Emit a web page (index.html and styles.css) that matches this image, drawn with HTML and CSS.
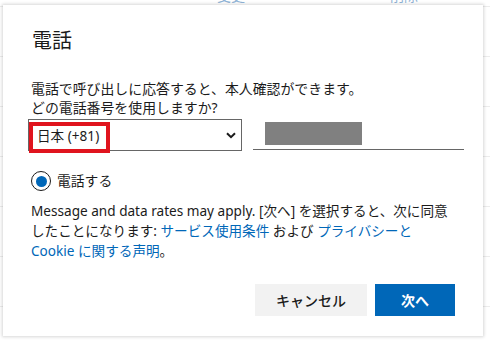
FILE: index.html
```html
<!DOCTYPE html>
<html lang="ja">
<head>
<meta charset="utf-8">
<link rel="stylesheet" href="styles.css">
</head>
<body>
<div class="page">
  <div class="page-head"><span class="bg-link l1">変更</span><span class="bg-link l2">削除</span></div>
  <div class="page-row"></div>
  <div class="page-row"></div>
  <div class="page-row"></div>
  <div class="page-row"></div>
  <div class="page-row"></div>
  <div class="page-row"></div>
</div>
<div class="dialog">
  <h1 class="title">電話</h1>
  <p class="intro">電話で呼び出しに応答すると、本人確認ができます。<br>どの電話番号を使用しますか?</p>
  <div class="fields">
    <div class="select">
      <span class="select-text">日本 (+81)</span>
      <svg class="chev" width="10" height="7" viewBox="0 0 10 7"><path d="M1 1.2 L5 5.2 L9 1.2" fill="none" stroke="#1b1b1b" stroke-width="2"/></svg>
      <div class="mark"></div>
    </div>
    <div class="phone"><div class="redact"></div></div>
  </div>
  <label class="radio"><span class="radio-circle"><span class="radio-dot"></span></span><span class="radio-text">電話する</span></label>
  <p class="terms">Message and data rates may apply. [次へ] を選択すると、次に同意したことになります: <a class="lnk">サービス使用条件</a> および <a class="lnk">プライバシーと Cookie に関する声明</a>。</p>
  <div class="buttons">
    <button class="btn btn-cancel">キャンセル</button>
    <button class="btn btn-next">次へ</button>
  </div>
</div>
</body>
</html>
```

FILE: styles.css
```css
html, body {
  margin: 0;
  padding: 0;
  background: #ffffff;
  width: 490px;
  height: 343px;
  overflow: hidden;
  font-family: "Noto Sans", "Noto Sans CJK JP", sans-serif;
  color: #1b1b1b;
}
.page {
  width: 490px;
}
.page-head {
  height: 18px;
  margin-top: -12px;
  position: relative;
  border-bottom: 1px solid #ececec;
}
.bg-link {
  position: absolute;
  top: 0;
  font-size: 14px;
  line-height: 16px;
  color: #8fb3d6;
}
.l1 { left: 217px; }
.l2 { left: 390px; }
.page-row {
  height: 49px;
  border-bottom: 1px solid #ececec;
}
.page-row:first-of-type { height: 50px; }
.dialog {
  position: absolute;
  left: 3px;
  top: 5px;
  width: 480px;
  height: 331px;
  box-sizing: border-box;
  background: #ffffff;
  box-shadow: 0 0 3px 1px rgba(0,0,0,0.16);
  padding: 22px 28px 20px 28px;
  display: flex;
  flex-direction: column;
}
.title {
  margin: 0;
  font-size: 20px;
  line-height: 28px;
  font-weight: 400;
  color: #1b1b1b;
  padding-left: 1px;
}
.intro {
  margin: 24px 0 0 0;
  font-size: 13.9px;
  line-height: 19px;
  padding-left: 0;
}
.fields {
  margin-top: 2px;
  margin-left: -3px;
  display: flex;
  align-items: flex-start;
  gap: 11px;
}
.select {
  position: relative;
  flex: 0 0 auto;
  width: 214px;
  height: 32px;
  box-sizing: border-box;
  border: 1px solid #666666;
  display: flex;
  align-items: center;
  justify-content: space-between;
  padding: 0 5px 0 8px;
}
.select-text {
  font-size: 13.6px;
  color: #1b1b1b;
}
.chev { display: block; margin-top: 1px; }
.mark {
  position: absolute;
  left: 0px;
  top: 2px;
  width: 81px;
  height: 31px;
  box-sizing: border-box;
  border: 4px solid #e0141e;
}
.phone {
  flex: 0 0 auto;
  width: 211px;
  height: 31px;
  border-bottom: 1px solid #666666;
  display: flex;
  align-items: flex-start;
  padding-left: 12px;
  box-sizing: border-box;
}
.redact {
  margin-top: 3px;
  width: 97px;
  height: 23px;
  background: #808080;
}
.radio {
  margin-top: 20px;
  display: flex;
  align-items: center;
  gap: 6px;
}
.radio-circle {
  width: 20px;
  height: 20px;
  box-sizing: border-box;
  border: 1.5px solid #1b1b1b;
  border-radius: 50%;
  display: flex;
  align-items: center;
  justify-content: center;
}
.radio-dot {
  width: 11px;
  height: 11px;
  border-radius: 50%;
  background: #0067b8;
}
.radio-text {
  font-size: 13.8px;
  line-height: 20px;
}
.terms {
  margin: 10px 0 0 0;
  font-size: 13.6px;
  line-height: 20px;
  color: #1b1b1b;
}
.lnk {
  color: #0067b8;
  text-decoration: none;
}
.buttons {
  margin-top: auto;
  display: flex;
  justify-content: flex-end;
  gap: 8px;
}
.btn {
  height: 32px;
  border: none;
  font-family: "Noto Sans", "Noto Sans CJK JP", sans-serif;
  font-size: 14px;
  padding: 0;
}
.btn-cancel {
  width: 112px;
  background: #f2f2f2;
  color: #1b1b1b;
  font-weight: 500;
}
.btn-next {
  width: 80px;
  background: #0067b8;
  color: #ffffff;
  font-weight: 700;
}
```
